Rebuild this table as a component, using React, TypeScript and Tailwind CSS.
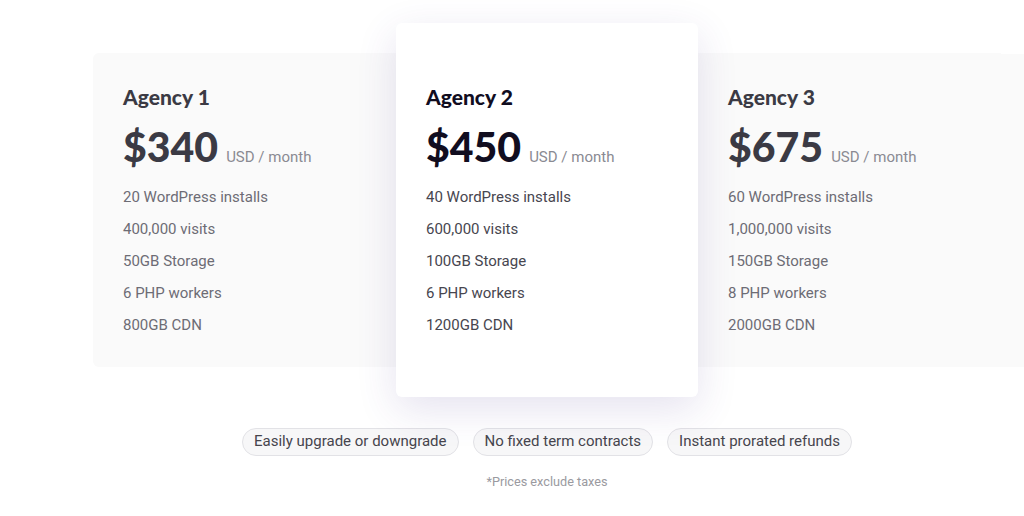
import React from 'react';

interface Plan {
  name: string;
  price: string;
  features: string[];
  featured?: boolean;
}

const plans: Plan[] = [
  { name: 'Agency 1', price: '$340', features: ['20 WordPress installs', '400,000 visits', '50GB Storage', '6 PHP workers', '800GB CDN'] },
  { name: 'Agency 2', price: '$450', features: ['40 WordPress installs', '600,000 visits', '100GB Storage', '6 PHP workers', '1200GB CDN'], featured: true },
  { name: 'Agency 3', price: '$675', features: ['60 WordPress installs', '1,000,000 visits', '150GB Storage', '8 PHP workers', '2000GB CDN'] },
];

const perks = ['Easily upgrade or downgrade', 'No fixed term contracts', 'Instant prorated refunds'];

function PlanCard({ name, price, features, featured }: Plan) {
  return (
    <div
      className={
        featured
          ? 'relative z-10 w-[302px] shrink-0 rounded-md bg-white px-[30px] pt-[61px] pb-[56px] shadow-[0_12px_40px_rgba(70,50,140,0.14)]'
          : 'w-[303px] shrink-0 bg-[#fafafa] px-[30px] pt-[31px] pb-[26px] first:rounded-l-md'
      }
    >
      <h3
        className={`font-['Lato',sans-serif] text-[21px] font-black leading-[26px] ${featured ? 'text-[#110d1f]' : 'text-[#3b3a44]'}`}
      >
        {name}
      </h3>
      <div className="mt-[13px] flex items-baseline gap-[8px]">
        <span className={`font-['Lato',sans-serif] text-[41px] font-black leading-[48px] ${featured ? 'text-[#110d1f]' : 'text-[#3b3a44]'}`}>
          {price}
        </span>
        <span className="font-['Roboto',sans-serif] text-[15px] text-[#8a8a92]">USD / month</span>
      </div>
      <ul className={`mt-[10px] font-['Roboto',sans-serif] text-[15px] leading-[32px] ${featured ? 'text-[#47464f]' : 'text-[#6d6c75]'}`}>
        {features.map((f) => (
          <li key={f}>{f}</li>
        ))}
      </ul>
    </div>
  );
}

export default function App() {
  return (
    <div className="h-[516px] w-[1024px] overflow-hidden bg-white">
      <div className="w-[1094px] pt-[23px]">
        <div className="flex items-center pl-[93px]">
          {plans.map((p) => (
            <PlanCard key={p.name} {...p} />
          ))}
          <div className="h-[313px] flex-1 bg-[#fafafa]" />
        </div>
        <div className="mt-[31px] flex justify-center gap-[14px] font-['Roboto',sans-serif]">
          {perks.map((p) => (
            <span key={p} className="h-[28px] rounded-full border border-[#e2e2e6] bg-[#f7f7f8] px-[11px] text-[15px] leading-[24px] text-[#46454d]">
              {p}
            </span>
          ))}
        </div>
        <p className="mt-[18px] text-center font-['Roboto',sans-serif] text-[12.7px] leading-[16px] text-[#9a9aa0]">*Prices exclude taxes</p>
      </div>
    </div>
  );
}
